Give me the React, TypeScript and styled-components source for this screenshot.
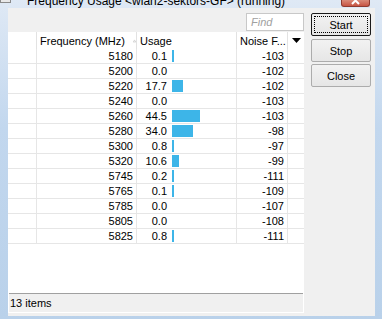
import * as React from 'react';
import styled, { createGlobalStyle } from 'styled-components';

const GlobalStyle = createGlobalStyle`
  html, body {
    margin: 0;
    padding: 0;
    background: #ffffff;
  }
  * {
    box-sizing: border-box;
  }
`;

interface IRow {
  freq: number;
  usage: string;
  noise: number;
}

const rows: IRow[] = [
  { freq: 5180, usage: '0.1', noise: -103 },
  { freq: 5200, usage: '0.0', noise: -102 },
  { freq: 5220, usage: '17.7', noise: -102 },
  { freq: 5240, usage: '0.0', noise: -103 },
  { freq: 5260, usage: '44.5', noise: -103 },
  { freq: 5280, usage: '34.0', noise: -98 },
  { freq: 5300, usage: '0.8', noise: -97 },
  { freq: 5320, usage: '10.6', noise: -99 },
  { freq: 5745, usage: '0.2', noise: -111 },
  { freq: 5765, usage: '0.1', noise: -109 },
  { freq: 5785, usage: '0.0', noise: -107 },
  { freq: 5805, usage: '0.0', noise: -108 },
  { freq: 5825, usage: '0.8', noise: -111 },
];

// bar width in px for a usage percentage
const barWidth = (v: number) => (v > 0 ? Math.max(2, Math.round(v * 0.63)) : 0);

export default function App() {
  return (
    <>
      <GlobalStyle />
      <Window>
        <TitleBar>
          <AppIcon />
          <Title>Frequency Usage &lt;wlan2-sektors-GF&gt; (running)</Title>
          <CloseX>
            <svg width="10" height="6" viewBox="0 0 10 6">
              <path d="M1 -3 L8 4 M8 -3 L1 4" stroke="#ffffff" strokeWidth="2" />
            </svg>
          </CloseX>
        </TitleBar>
        <Client>
          <LeftPane>
            <Toolbar>
              <FindBox>Find</FindBox>
            </Toolbar>
            <ListBox>
              <HeaderRow>
                <HeadCell first />
                <HeadCell>
                  Frequency (MHz)
                  <SortMark width="7" height="6" viewBox="0 0 7 6">
                    <path d="M0.5 5.5 L3.5 0.5 L6.5 5.5 Z" fill="#f4f4f4" stroke="#b4b4b4" />
                  </SortMark>
                </HeadCell>
                <HeadCell>Usage</HeadCell>
                <HeadCell>Noise F...</HeadCell>
                <HeadCell center>
                  <svg width="9" height="5" viewBox="0 0 9 5">
                    <path d="M0 0 L9 0 L4.5 5 Z" fill="#000000" />
                  </svg>
                </HeadCell>
              </HeaderRow>
              {rows.map(r => (
                <Row key={r.freq}>
                  <Cell first />
                  <Cell right>{r.freq}</Cell>
                  <Cell>
                    <UsageNum>{r.usage}</UsageNum>
                    <Bar style={{ width: barWidth(parseFloat(r.usage)) }} />
                  </Cell>
                  <Cell right>{r.noise}</Cell>
                  <Cell />
                </Row>
              ))}
              <Filler />
              <StatusBar>13 items</StatusBar>
            </ListBox>
          </LeftPane>
          <RightPane>
            <Button primary>
              <FocusRing>Start</FocusRing>
            </Button>
            <Button>Stop</Button>
            <Button>Close</Button>
          </RightPane>
        </Client>
      </Window>
    </>
  );
}

const Window = styled.div`
  width: 382px;
  height: 319px;
  display: flex;
  flex-direction: column;
  overflow: hidden;
  background: linear-gradient(#dfe9f5, #c2d7ee 40%, #b9d1ea);
  font-family: 'Liberation Sans', Arial, sans-serif;
  font-size: 11px;
  color: #000000;
`;

const TitleBar = styled.div`
  height: 8px;
  flex: none;
  display: flex;
  align-items: flex-start;
  overflow: hidden;
`;

const AppIcon = styled.div`
  width: 11px;
  height: 3px;
  margin-top: 0;
  background: #e8e8e8;
  border: 1px solid #8a8a8a;
  border-top: none;
`;

const Title = styled.div`
  margin-left: 16px;
  margin-top: -6px;
  font-size: 12px;
  line-height: 14px;
  color: #000000;
  white-space: nowrap;
`;

const CloseX = styled.div`
  margin-left: auto;
  margin-right: 12px;
  width: 29px;
  height: 7px;
  display: flex;
  justify-content: center;
  background: linear-gradient(#d98a78, #c75442);
  border: 1px solid #8d3b30;
  border-top: none;
  border-radius: 0 0 3px 3px;
`;

const Client = styled.div`
  flex: 1;
  display: flex;
  margin: 0 7px 3px 8px;
  background: #f0f0f0;
`;

const LeftPane = styled.div`
  width: 296px;
  display: flex;
  flex-direction: column;
  padding: 5px 0 3px 0;
`;

const Toolbar = styled.div`
  height: 18px;
  display: flex;
  justify-content: flex-end;
  margin-bottom: 1px;
`;

const FindBox = styled.div`
  width: 58px;
  height: 18px;
  padding-left: 4px;
  background: #ffffff;
  border: 1px solid #c8c8c8;
  font-style: italic;
  line-height: 16px;
  color: #a0a0a0;
`;

const ListBox = styled.div`
  flex: 1;
  display: flex;
  flex-direction: column;
  background: #ffffff;
`;

const columns = '28px 100px 100px 51px 17px';

const HeaderRow = styled.div`
  display: grid;
  grid-template-columns: ${columns};
  height: 17px;
`;

const HeadCell = styled.div<{ first?: boolean; center?: boolean }>`
  display: flex;
  align-items: center;
  justify-content: ${p => (p.center ? 'center' : 'flex-start')};
  padding-left: ${p => (p.center ? '0' : '3px')};
  border-left: ${p => (p.first ? 'none' : '1px solid #e2e2e2')};
  white-space: nowrap;
`;

const SortMark = styled.svg`
  margin-left: 8px;
  margin-top: 1px;
`;

const Row = styled.div`
  display: grid;
  grid-template-columns: ${columns};
  height: 15px;
  border-bottom: 1px solid #e6e6e6;
`;

const Cell = styled.div<{ first?: boolean; right?: boolean }>`
  display: flex;
  align-items: center;
  justify-content: ${p => (p.right ? 'flex-end' : 'flex-start')};
  padding-right: ${p => (p.right ? '3px' : '0')};
  border-left: ${p => (p.first ? 'none' : '1px solid #e6e6e6')};
  line-height: 14px;
`;

const UsageNum = styled.span`
  width: 30px;
  text-align: right;
`;

const Bar = styled.div`
  height: 12px;
  margin-left: 5px;
  background: #3db5e8;
`;

const Filler = styled.div`
  flex: 1;
`;

const StatusBar = styled.div`
  height: 19px;
  margin: 0 1px 1px 1px;
  padding-left: 1px;
  display: flex;
  align-items: center;
  background: #f0f0f0;
  border-top: 1px solid #a0a0a0;
`;

const RightPane = styled.div`
  width: 60px;
  margin-left: 7px;
  padding-top: 5px;
  display: flex;
  flex-direction: column;
  gap: 2px;
`;

const Button = styled.div<{ primary?: boolean }>`
  height: 23px;
  display: flex;
  align-items: center;
  justify-content: center;
  padding: 2px;
  margin-bottom: ${p => (p.primary ? '1px' : '0')};
  border: 1px solid ${p => (p.primary ? '#1a1a1a' : '#acacac')};
  border-radius: 2px;
  background: linear-gradient(#f2f2f2, #e6e6e6);
`;

const FocusRing = styled.div`
  flex: 1;
  align-self: stretch;
  display: flex;
  align-items: center;
  justify-content: center;
  border: 1px dotted #000000;
`;
